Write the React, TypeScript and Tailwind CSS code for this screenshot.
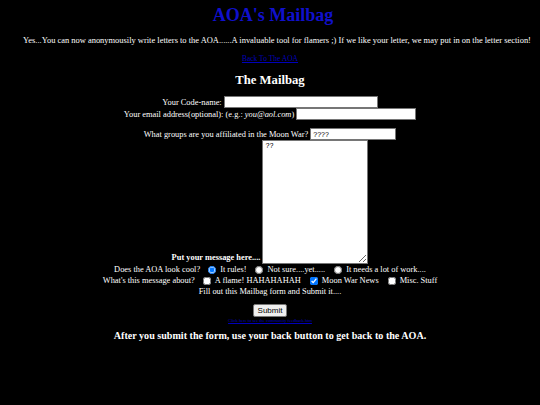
export default function App() {
  return (
    <div className="min-h-[405px] w-full bg-black font-['Liberation_Serif',serif] text-white text-[8.4px] leading-[11px]">
      <h1 className="pt-[4px] pl-[6px] text-center text-[18px] leading-[22px] font-bold text-[#1010cc]">AOA's Mailbag</h1>
      <p className="mt-[9px] pl-[14px] text-center text-[8.45px]">
        Yes...You can now anonymousily write letters to the AOA......A invaluable tool for flamers ;) If we like your letter, we may put in on the letter section!
      </p>
      <p className="mt-[8px] text-center text-[7.5px] leading-[9px]">
        <a href="#" className="text-[#0000bb] underline">Back To The AOA</a>
      </p>
      <h2 className="mt-[10px] text-center text-[12.7px] leading-[15px] font-bold">The Mailbag</h2>

      <form className="mt-[8px] flex flex-col items-center" onSubmit={(e) => e.preventDefault()}>
        <div className="flex h-[12px] items-center">
          <span>Your Code-name:</span>
          <input type="text" className="ml-[2px] h-[12px] w-[154px] border border-[#767676] bg-white px-[2px] text-[8px] text-black outline-none" />
        </div>
        <div className="flex h-[12px] items-center">
          <span>
            Your email address(optional): (e.g.: <i>you@aol.com</i>)
          </span>
          <input type="text" className="ml-[2px] h-[12px] w-[120px] border border-[#767676] bg-white px-[2px] text-[8px] text-black outline-none" />
        </div>
        <div className="mt-[8px] flex h-[12px] items-center">
          <span>What groups are you affiliated in the Moon War?</span>
          <input type="text" defaultValue="????" className="ml-[2px] h-[12px] w-[86px] border border-[#767676] bg-white px-[2px] text-[7px] leading-[9px] text-black outline-none font-['Liberation_Sans',sans-serif]" />
        </div>
        <div className="flex items-end">
          <span className="mb-[1px] font-bold">Put your message here....</span>
          <textarea defaultValue="??" className="ml-[2px] h-[124px] w-[106px] resize border border-[#767676] bg-white px-[2px] py-[1px] text-[7px] leading-[8px] text-black outline-none font-['Liberation_Mono',monospace]" />
        </div>
        <div className="flex h-[11px] items-center">
          <span>Does the AOA look cool?</span>
          <input type="radio" name="cool" defaultChecked className="ml-[8px] mr-[4px] h-[8px] w-[8px] accent-[#0075ff]" />
          <span>It rules!</span>
          <input type="radio" name="cool" className="ml-[9px] mr-[4px] h-[8px] w-[8px]" />
          <span>Not sure....yet.....</span>
          <input type="radio" name="cool" className="ml-[9px] mr-[4px] h-[8px] w-[8px]" />
          <span>It needs a lot of work....</span>
        </div>
        <div className="flex h-[11px] items-center">
          <span>What's this message about?</span>
          <input type="checkbox" className="ml-[8px] mr-[4px] h-[8px] w-[8px]" />
          <span>A flame! HAHAHAHAH</span>
          <input type="checkbox" defaultChecked className="ml-[9px] mr-[4px] h-[8px] w-[8px] accent-[#0075ff]" />
          <span>Moon War News</span>
          <input type="checkbox" className="ml-[9px] mr-[4px] h-[8px] w-[8px]" />
          <span>Misc. Stuff</span>
        </div>
        <div className="flex h-[11px] items-center">Fill out this Mailbag form and Submit it....</div>
        <button type="submit" className="mt-[7px] h-[13px] rounded-[2px] border border-[#767676] bg-[#efefef] px-[4px] text-[8px] leading-[10px] text-black font-['Liberation_Sans',sans-serif]">
          Submit
        </button>
        <a href="#" className="mt-[0px] text-[4.5px] leading-[7px] text-[#0000bb] underline">
          Click here to see the community feedback.htm
        </a>
      </form>

      <h3 className="mt-[5px] text-center text-[10.1px] leading-[13px] font-bold">
        After you submit the form, use your back button to get back to the AOA.
      </h3>
    </div>
  );
}
